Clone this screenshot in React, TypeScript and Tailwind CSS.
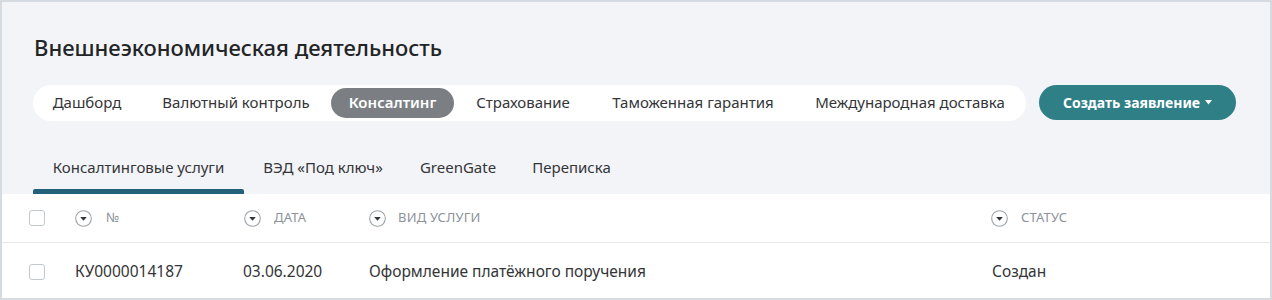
import React from "react";

const font = { fontFamily: '"Noto Sans", "Open Sans", sans-serif' };

function FilterIcon() {
  return (
    <svg width="17" height="17" viewBox="0 0 17 17" className="shrink-0">
      <circle cx="8.5" cy="8.5" r="7.8" fill="none" stroke="#9ea3a8" strokeWidth="1.1" />
      <path d="M5.2 7 L11.8 7 L8.5 10.8 Z" fill="#35383b" />
    </svg>
  );
}

function Checkbox() {
  return <div className="w-4 h-4 rounded-[3px] border border-[#c3c8cd] bg-white shrink-0" />;
}

const tabs = [
  { label: "Дашборд", w: "w-[108px]" },
  { label: "Валютный контроль", w: "w-[190px]" },
  { label: "Консалтинг", w: "w-[123px]", active: true },
  { label: "Страхование", w: "w-[138px]" },
  { label: "Таможенная гарантия", w: "w-[202px]" },
  { label: "Международная доставка", w: "w-[232px]" },
];

const subtabs = [
  { label: "Консалтинговые услуги", w: "w-[211px]", active: true },
  { label: "ВЭД «Под ключ»", w: "w-[158px]" },
  { label: "GreenGate", w: "w-[112px]" },
  { label: "Переписка", w: "w-[115px]" },
];

export default function App() {
  return (
    <div style={font} className="w-[1272px] h-[300px] border-2 border-[#d5dbe0] bg-[#f3f4f8] flex flex-col overflow-hidden">
      <div className="flex flex-col px-[31px]">
        <div className="h-[82px] flex items-center pt-[8px]">
          <h1 className="text-[22px] font-medium text-[#222426] leading-none pl-[1px]">
            Внешнеэкономическая деятельность
          </h1>
        </div>
        <div className="flex items-center justify-between h-[37px]">
          <div className="flex items-center bg-white rounded-full h-[36px] py-[3px]">
            {tabs.map((t) => (
              <div
                key={t.label}
                className={`${t.w} h-[30px] flex items-center justify-center rounded-full text-[15px] ${
                  t.active ? "bg-[#7b7f84] text-white font-semibold" : "text-[#333537]"
                }`}
              >
                {t.label}
              </div>
            ))}
          </div>
          <button className="w-[197px] h-[35px] mr-[3px] rounded-full bg-[#2f7f87] text-white text-[14px] font-bold flex items-center justify-center gap-[5px]">
            <span>Создать заявление</span>
            <svg width="7" height="5" viewBox="0 0 7 5">
              <path d="M0 0 L7 0 L3.5 4.5 Z" fill="#ffffff" />
            </svg>
          </button>
        </div>
        <div className="flex h-[73px] items-end">
          {subtabs.map((t) => (
            <div key={t.label} className={`${t.w} h-[48px] flex flex-col`}>
              <div className="flex-1 flex items-center justify-center text-[15px] text-[#333537] pb-[1px]">
                {t.label}
              </div>
              <div className={`h-[5px] ${t.active ? "bg-[#23607a] rounded-t-[2px]" : ""}`} />
            </div>
          ))}
        </div>
      </div>
      <div className="flex-1 bg-white flex flex-col">
        <div className="h-[49px] border-b border-[#e6e8eb] flex items-center pl-[27px]">
          <div className="w-[46px] flex"><Checkbox /></div>
          <div className="w-[169px] flex items-center gap-[14px]">
            <FilterIcon />
            <span className="text-[13px] text-[#8d9298] tracking-[0.2px]">№</span>
          </div>
          <div className="w-[125px] flex items-center gap-[13px]">
            <FilterIcon />
            <span className="text-[13px] text-[#8d9298] tracking-[0.2px]">ДАТА</span>
          </div>
          <div className="w-[622px] flex items-center gap-[12px]">
            <FilterIcon />
            <span className="text-[13px] text-[#8d9298] tracking-[0.2px]">ВИД УСЛУГИ</span>
          </div>
          <div className="flex items-center gap-[13px]">
            <FilterIcon />
            <span className="text-[13px] text-[#8d9298] tracking-[0.2px]">СТАТУС</span>
          </div>
        </div>
        <div className="flex-1 flex items-center pl-[27px] pt-[3px] text-[15.5px] text-[#333537]">
          <div className="w-[46px] flex"><Checkbox /></div>
          <div className="w-[168px]">КУ0000014187</div>
          <div className="w-[126px]">03.06.2020</div>
          <div className="w-[623px]">Оформление платёжного поручения</div>
          <div>Создан</div>
        </div>
      </div>
    </div>
  );
}
